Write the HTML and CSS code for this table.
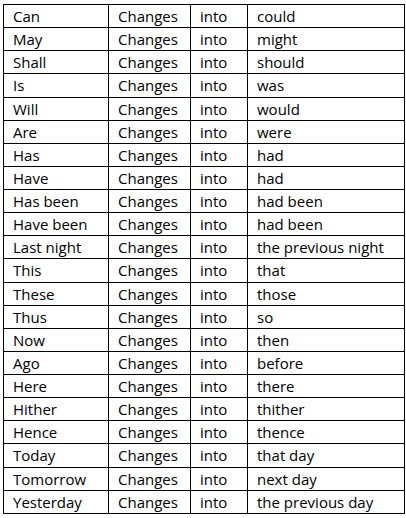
FILE: index.html
```html
<!DOCTYPE html>
<html>
<head>
<meta charset="utf-8">
<link rel="stylesheet" href="styles.css">
</head>
<body>
<table class="grid">
<colgroup><col class="c1"><col class="c2"><col class="c3"><col class="c4"></colgroup>
<tbody>
<tr><td>Can</td><td>Changes</td><td>into</td><td>could</td></tr>
<tr><td>May</td><td>Changes</td><td>into</td><td>might</td></tr>
<tr><td>Shall</td><td>Changes</td><td>into</td><td>should</td></tr>
<tr><td>Is</td><td>Changes</td><td>into</td><td>was</td></tr>
<tr><td>Will</td><td>Changes</td><td>into</td><td>would</td></tr>
<tr><td>Are</td><td>Changes</td><td>into</td><td>were</td></tr>
<tr><td>Has</td><td>Changes</td><td>into</td><td>had</td></tr>
<tr><td>Have</td><td>Changes</td><td>into</td><td>had</td></tr>
<tr><td>Has been</td><td>Changes</td><td>into</td><td>had been</td></tr>
<tr><td>Have been</td><td>Changes</td><td>into</td><td>had been</td></tr>
<tr><td>Last night</td><td>Changes</td><td>into</td><td>the previous night</td></tr>
<tr><td>This</td><td>Changes</td><td>into</td><td>that</td></tr>
<tr><td>These</td><td>Changes</td><td>into</td><td>those</td></tr>
<tr><td>Thus</td><td>Changes</td><td>into</td><td>so</td></tr>
<tr><td>Now</td><td>Changes</td><td>into</td><td>then</td></tr>
<tr><td>Ago</td><td>Changes</td><td>into</td><td>before</td></tr>
<tr><td>Here</td><td>Changes</td><td>into</td><td>there</td></tr>
<tr><td>Hither</td><td>Changes</td><td>into</td><td>thither</td></tr>
<tr><td>Hence</td><td>Changes</td><td>into</td><td>thence</td></tr>
<tr><td>Today</td><td>Changes</td><td>into</td><td>that day</td></tr>
<tr><td>Tomorrow</td><td>Changes</td><td>into</td><td>next day</td></tr>
<tr><td>Yesterday</td><td>Changes</td><td>into</td><td>the previous day</td></tr>
</tbody>
</table>
</body>
</html>
```
FILE: styles.css
```css
html, body {
  margin: 0;
  padding: 0;
  background: #ffffff;
}
body {
  padding: 4px 0 0 3px;
}
.grid {
  border-collapse: collapse;
  table-layout: fixed;
  width: 401px;
  height: 510px;
  font-family: "Open Sans", Lato, sans-serif;
  font-size: 15px;
  color: #000000;
}
.c1 { width: 105px; }
.c2 { width: 82px; }
.c3 { width: 57px; }
.c4 { width: 157px; }
.grid td {
  border: 1px solid #000000;
  padding: 0 0 0 9px;
  vertical-align: middle;
  white-space: nowrap;
  line-height: 18px;
}
```
